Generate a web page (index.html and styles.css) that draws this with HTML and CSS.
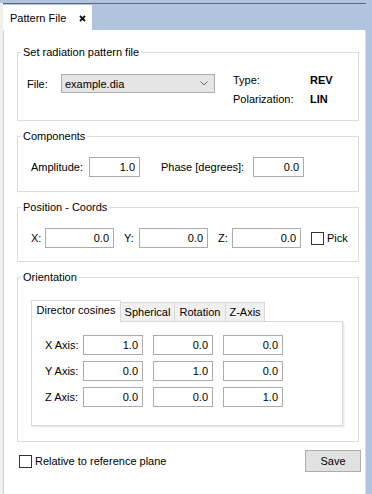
FILE: index.html
```html
<!DOCTYPE html>
<html lang="en">
<head>
    <meta charset="UTF-8">
    <title>Pattern File</title>
    <link rel="stylesheet" href="styles.css">
</head>
<body>
    <div class="window">
        <!-- Document tab -->
        <div class="tabbar">
            <div class="doc-tab">
                <span>Pattern File</span>
                <svg class="close" width="7" height="7" viewBox="0 0 7 7">
                    <path d="M1 1 L6 6 M6 1 L1 6" stroke="#111" stroke-width="1.8"/>
                </svg>
            </div>
        </div>

        <div class="panel">
            <fieldset class="group file-group">
                <legend>Set radiation pattern file</legend>
                <div class="file-row">
                    <span class="file-label">File:</span>
                    <div class="combo">
                        <span>example.dia</span>
                        <svg width="8" height="5" viewBox="0 0 8 5">
                            <path d="M0.5 0.5 L4 4 L7.5 0.5" fill="none" stroke="#666" stroke-width="1"/>
                        </svg>
                    </div>
                </div>
                <div class="info">
                    <span>Type:</span><b>REV</b>
                    <span>Polarization:</span><b>LIN</b>
                </div>
            </fieldset>

            <fieldset class="group">
                <legend>Components</legend>
                <div class="row">
                    <label class="lbl amp-lbl">Amplitude:</label>
                    <input class="num w51" type="text" value="1.0">
                    <label class="lbl phase-lbl">Phase [degrees]:</label>
                    <input class="num w51" type="text" value="0.0">
                </div>
            </fieldset>

            <fieldset class="group pos-group">
                <legend>Position - Coords</legend>
                <div class="row">
                    <label class="lbl x-lbl">X:</label>
                    <input class="num w69" type="text" value="0.0">
                    <label class="lbl y-lbl">Y:</label>
                    <input class="num w69" type="text" value="0.0">
                    <label class="lbl z-lbl">Z:</label>
                    <input class="num w69" type="text" value="0.0">
                    <span class="check pick-check"></span>
                    <span>Pick</span>
                </div>
            </fieldset>

            <fieldset class="group orient-group">
                <legend>Orientation</legend>
                <div class="tabs">
                    <div class="tab active t-dir">Director cosines</div>
                    <div class="tab t-sph">Spherical</div>
                    <div class="tab t-rot">Rotation</div>
                    <div class="tab t-z">Z-Axis</div>
                </div>
                <div class="tab-pane">
                    <div class="axis-row">
                        <label class="axis-lbl">X Axis:</label>
                        <input class="num w60" type="text" value="1.0">
                        <input class="num w60" type="text" value="0.0">
                        <input class="num w60" type="text" value="0.0">
                    </div>
                    <div class="axis-row">
                        <label class="axis-lbl">Y Axis:</label>
                        <input class="num w60" type="text" value="0.0">
                        <input class="num w60" type="text" value="1.0">
                        <input class="num w60" type="text" value="0.0">
                    </div>
                    <div class="axis-row">
                        <label class="axis-lbl">Z Axis:</label>
                        <input class="num w60" type="text" value="0.0">
                        <input class="num w60" type="text" value="0.0">
                        <input class="num w60" type="text" value="1.0">
                    </div>
                </div>
            </fieldset>

            <div class="footer">
                <div class="relative">
                    <span class="check"></span>
                    <span>Relative to reference plane</span>
                </div>
                <button class="save" type="button">Save</button>
            </div>
        </div>
    </div>
</body>
</html>
```

FILE: styles.css
```css
/* Basic Reset */
* {
    margin: 0;
    padding: 0;
    box-sizing: border-box;
}

body {
    font-family: 'Liberation Sans', Arial, sans-serif;
    font-size: 11px;
    color: #000;
    background-color: #b0c4de;
    width: 372px;
    height: 494px;
    overflow: hidden;
}

.window {
    width: 366px;
    height: 494px;
    border-left: 3px solid #f0f0f0;
}

/* Top document tab strip */
.tabbar {
    margin-top: 3px;
    border-top: 1px solid #56687a;
    padding-top: 1px;
    height: 27px;
    background-color: #b0c4de;
}

.doc-tab {
    width: 89px;
    height: 25px;
    background-color: #fff;
    display: flex;
    align-items: center;
    padding-left: 7px;
    font-size: 11px;
}

.doc-tab .close {
    margin-left: 13px;
    margin-top: 1px;
}

.panel {
    height: 464px;
    background-color: #fff;
    border-left: 1px solid #d2d2d2;
    border-right: 1px solid #dcdcdc;
    padding-top: 15px;
}

/* Group boxes */
.group {
    border: 1px solid #dcdcdc;
    margin: 0 0 8px 13px;
    width: 342px;
    min-width: 0;
    padding: 14px 0 14px 0;
}

.group legend {
    padding: 0 2px;
    margin-left: 3px;
    line-height: 14px;
}

.file-group {
    display: flex;
    align-items: flex-start;
    padding: 11px 0 12px 0;
}

.file-row {
    display: flex;
    align-items: center;
    margin: 4px 0 0 9px;
}

.file-label {
    width: 34px;
}

.combo {
    width: 154px;
    height: 19px;
    background-color: #e5e5e5;
    border: 1px solid #acacac;
    display: flex;
    align-items: center;
    justify-content: space-between;
    padding: 0 6px 0 3px;
}

.info {
    margin-left: 18px;
    display: grid;
    grid-template-columns: 77px auto;
    grid-auto-rows: 19px;
    align-items: center;
}

.row {
    display: flex;
    align-items: center;
    padding-left: 13px;
}

.pos-group {
    padding-bottom: 13px;
}

.lbl {
    display: block;
}

.amp-lbl { width: 58px; }
.phase-lbl { width: 92px; margin-left: 21px; }
.x-lbl { width: 14px; }
.y-lbl { width: 15px; margin-left: 10px; }
.z-lbl { width: 14px; margin-left: 10px; }

input.num {
    height: 20px;
    border: 1px solid #ababab;
    background-color: #fff;
    font-family: inherit;
    font-size: 11px;
    color: #000;
    text-align: right;
    padding: 0 4px 0 3px;
    outline: none;
}

.w51 { width: 51px; }
.w60 { width: 60px; }
.w69 { width: 69px; }

.check {
    display: inline-block;
    width: 13px;
    height: 13px;
    border: 1px solid #333;
    background-color: #fff;
    margin-right: 3px;
}

.pick-check {
    margin-left: 10px;
}

/* Inner tab control */
.orient-group {
    padding: 16px 0 15px 13px;
}

.orient-group legend {
    margin-left: -10px;
}

.tabs {
    display: flex;
    align-items: flex-end;
    height: 21px;
}

.tab {
    height: 19px;
    border: 1px solid #d9d9d9;
    border-bottom: none;
    background-color: #f0f0f0;
    margin-left: -1px;
    text-align: center;
    line-height: 18px;
}

.tab.active {
    height: 22px;
    margin-left: 0;
    margin-bottom: -1px;
    background-color: #fff;
    line-height: 19px;
    position: relative;
    z-index: 1;
}

.t-dir { width: 90px; }
.t-sph { width: 55px; }
.t-rot { width: 52px; }
.t-z { width: 40px; }

.tab-pane {
    width: 312px;
    height: 105px;
    border: 1px solid #d9d9d9;
    box-shadow: 1px 1px 0 #ececec, 2px 2px 0 #f4f4f4;
    padding: 13px 0 0 13px;
}

.axis-row {
    display: flex;
    align-items: center;
    margin-bottom: 6px;
}

.axis-row input {
    margin-right: 10px;
}

.axis-lbl {
    width: 38px;
}

/* Bottom bar */
.footer {
    margin-top: 7px;
    display: flex;
    justify-content: space-between;
    align-items: center;
    padding: 0 4px 0 15px;
}

.relative {
    display: flex;
    align-items: center;
}

.save {
    width: 56px;
    height: 22px;
    background-color: #e1e1e1;
    border: 1px solid #adadad;
    font-family: inherit;
    font-size: 11px;
    color: #000;
}
```
